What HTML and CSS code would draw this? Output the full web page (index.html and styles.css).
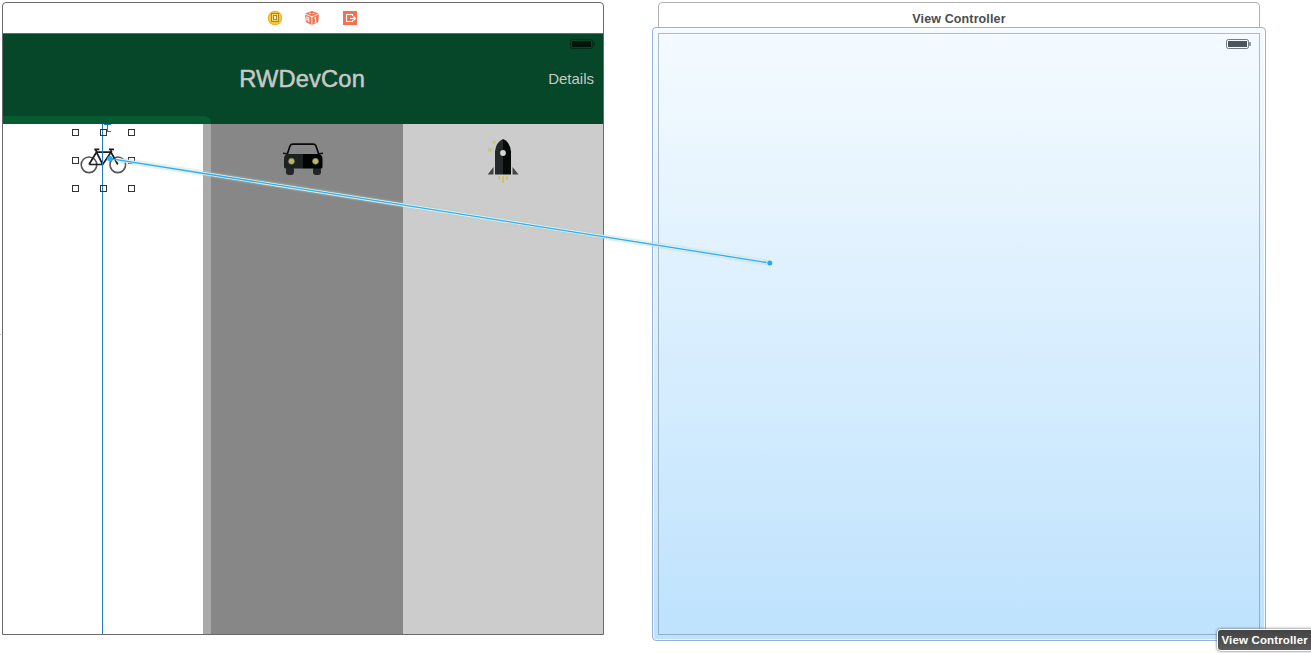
FILE: index.html
```html
<!DOCTYPE html>
<html lang="en">
<head>
<meta charset="utf-8">
<title>Storyboard</title>
<link rel="stylesheet" href="styles.css">
</head>
<body>
<main class="canvas">
  <i class="edge-mark"></i>
  <section class="scene scene-main">
    <header class="dock">
      <svg width="16" height="16" viewBox="0 0 16 16">
        <circle cx="8" cy="8" r="7.3" fill="#f7c844"/>
        <circle cx="8" cy="8" r="6.6" fill="none" stroke="#eeb331" stroke-width="1"/>
        <rect x="4.5" y="3.500" width="7" height="8" fill="#f9d86f" stroke="#a88822"/>
        <rect x="6.5" y="5.500" width="3" height="4" fill="#fff5c9" stroke="#a88822"/>
      </svg>
      <svg width="16" height="16" viewBox="0 0 16 16">
        <path d="M8 1L14.7 3.5 8 6.3 1 3.6z" fill="#f47350"/>
        <path d="M1 4.4L7.5 7v8L2 12z" fill="#f3714f"/>
        <path d="M8.3 7L15 4.3 14.3 12 8.3 15z" fill="#f3714f"/>
        <path d="M5 3.5h2M8.5 3.5h2" stroke="#fff" stroke-width=".8"/>
        <path d="M3 7v3h1.7V7.8zM4.8 10v2M10.5 8.5l1-1v4.8M10.5 12.5l2-.8" fill="none" stroke="#fff" stroke-width="1.1"/>
      </svg>
      <svg width="16" height="16" viewBox="0 0 16 16">
        <rect x="1" y="1" width="14" height="14" fill="#f3714f"/>
        <path d="M10.5 6V4.5h-6v7h6V10M8 8.5h5M11.5 6.5l2 2-2 2" fill="none" stroke="#fff" stroke-width="1.1"/>
      </svg>
    </header>
    <div class="navbar">
      <h1 class="nav-title">RWDevCon</h1>
      <span class="nav-action">Details</span>
      <svg class="battery" width="25" height="10" viewBox="0 0 25 10">
        <rect x=".5" y=".5" width="22" height="9" rx="1.8" fill="none" stroke="#042d19"/>
        <rect x="2" y="2" width="19" height="6" fill="#00150a"/>
        <path d="M24 3v4" stroke="#042b17" stroke-width="1.3"/>
      </svg>
      <i class="drop-tint"></i>
    </div>
    <div class="columns">
      <div class="column bike"></div>
      <div class="column overlap"></div>
      <div class="column car">
        <svg width="42" height="36" viewBox="0 0 42 36">
          <rect x="4" y="27" width="8" height="8" rx="3" fill="#242626"/>
          <rect x="31" y="27" width="8" height="8" rx="3" fill="#242626"/>
          <path d="M5 15L8 6q.7-1.800 3-1.800h20q2.300 0 3 1.800l3 9" fill="none" stroke="#090b0b" stroke-width="1.700"/>
          <path d="M1 13.300l4 .4M37 13.700l4-.4" stroke="#111" stroke-width="1.500"/>
          <path d="M21 14H5q-3 1-3 5v8q0 1.500 1.500 1.500H21z" fill="#1c2122"/>
          <path d="M21 14h16q3.500 1 3.500 5v8q0 1.500-1.500 1.500H21z" fill="#000403"/>
          <circle cx="9.500" cy="21.300" r="3" fill="#b9b86a" stroke="#73734b" stroke-width=".7"/>
          <circle cx="33.500" cy="21.300" r="3" fill="#b9b86a" stroke="#73734b" stroke-width=".7"/>
        </svg>
      </div>
      <div class="column rocket">
        <svg width="32" height="46" viewBox="0 0 32 46">
          <path d="M8 36.500V13.500Q9 4 16 1v35.500z" fill="#25292a"/>
          <path d="M16 36.500V1q7 3 8 12.500v23z" fill="#060a09"/>
          <path d="M6.500 29v7.500H.7z M25.500 29v7.500h6z" fill="#444"/>
          <circle cx="16" cy="15" r="2.900" fill="#d5d6d2"/>
          <path d="M7 1.500l.7 1.700 1.800.1-1.400 1.200.5 1.800L7 5.300l-1.600 1 .5-1.800-1.400-1.200 1.800-.1zM3 8.800l.8 2 2.200.1-1.700 1.400.6 2.100L3 13.200l-1.900 1.200.6-2.100L0 10.900l2.200-.1z" fill="#c9c568"/>
          <path d="M12.300 38v4M16 38v7M19.800 38v4" stroke="#c9c568" stroke-width="1.900"/>
        </svg>
      </div>
    </div>
  </section>

  <section class="scene scene-target">
    <header class="scene-title">View Controller</header>
    <div class="view"></div>
  </section>
  <div class="drop-highlight">
    <div class="view-outline">
      <svg class="battery" width="25" height="10" viewBox="0 0 25 10">
        <rect x=".5" y=".5" width="22" height="9" rx="1.800" fill="#f4faff" stroke="#737c83"/>
        <rect x="2" y="2" width="19" height="6" fill="#4d565c"/>
        <path d="M24 3v4" stroke="#626b72" stroke-width="1.300"/>
      </svg>
    </div>
  </div>

  <svg class="overlay" width="1311" height="653" viewBox="0 0 1311 653">
    <defs>
      <filter id="glow" filterUnits="userSpaceOnUse" x="90" y="140" width="700" height="140"><feGaussianBlur stdDeviation="1.100"/></filter>
    </defs>
    <g fill="none" stroke="#555" stroke-width="1.600">
      <circle cx="89" cy="164.800" r="7.800"/>
      <circle cx="117.800" cy="164.800" r="7.800"/>
    </g>
    <path d="M89 164.500l7.500-12.300H111l-8.300 12.300H89M96.500 152.200l6.200 12.300M95.500 149.500l1.500 3M94.300 149.300h5M109 149.300h5M111 149.500v2.700l6.800 12.300" fill="none" stroke="#1c1c1c" stroke-width="1.700"/>
    <path d="M102.500 124v510" stroke="#237ab8"/>
    <path d="M104 124.500h7M107.500 124v7M104 131.500h7" fill="none" stroke="#237ab8"/>
    <g fill="#fff" stroke="#333">
      <rect x="72.500" y="129.500" width="6" height="6"/><rect x="100.500" y="129.500" width="6" height="6"/><rect x="128.500" y="129.500" width="6" height="6"/>
      <rect x="72.500" y="157.500" width="6" height="6"/><rect x="128.500" y="157.500" width="6" height="6"/>
      <rect x="72.500" y="185.500" width="6" height="6"/><rect x="100.500" y="185.500" width="6" height="6"/><rect x="128.500" y="185.500" width="6" height="6"/>
    </g>
    <path d="M102.500 130v5M102.500 186v5" stroke="#237ab8"/>
    <path d="M120 160.200L770 263" stroke="#a9cfc0" stroke-width="4" opacity=".65" filter="url(#glow)"/>
    <path d="M116 159.600L770 263" stroke="#e4f4ee" stroke-width="3"/>
    <path d="M110 158.700L770 263" stroke="#29abf8" stroke-width="1.300"/>
    <circle cx="110" cy="158.700" r="2.700" fill="#29abfb"/>
    <circle cx="769.800" cy="263" r="3.300" fill="#dff3fc"/>
    <circle cx="769.800" cy="263" r="2.500" fill="#29a5f5"/>
  </svg>
  <div class="tooltip">View Controller</div>
</main>
</body>
</html>
```
FILE: styles.css
```css
* { box-sizing: border-box; }
body { margin: 0; background: #fff; font-family: "Liberation Sans", Arial, sans-serif; }
.canvas { position: relative; width: 1311px; height: 653px; overflow: hidden; background: #fff; }
.edge-mark { position: absolute; left: 0; top: 334px; width: 1px; height: 1px; background: #bbb; }
.scene { position: absolute; top: 2px; width: 602px; height: 633px; display: flex; flex-direction: column; background: #fff; }
.scene-main { left: 2px; border: 1px solid #6a6a6a; border-radius: 4px 4px 0 0; overflow: hidden; }
.dock { height: 31px; flex: none; border-bottom: 1px solid #6a6a6a; display: flex; justify-content: center; align-items: center; gap: 21.5px; padding-left: 18px; }
.navbar { position: relative; height: 90px; flex: none; background: #054728; color: #c9c9c9; display: flex; align-items: center; justify-content: flex-end; padding-right: 9px; }
.nav-title { flex: 1; margin: 0; padding-left: 53px; text-align: center; font-size: 23.7px; line-height: 28px; font-weight: 400; letter-spacing: .15px; -webkit-text-stroke: .5px #c9c9c9; }
.nav-action { font-size: 15px; line-height: 20px; }
.battery { position: absolute; right: 8px; top: 5px; }
.drop-tint { position: absolute; left: 0; bottom: 0; width: 208px; height: 8px; background: #075b30; border-top-right-radius: 7px; }
.columns { flex: 1; display: flex; }
.column { display: flex; justify-content: center; align-items: flex-start; }
.bike { width: 200px; background: #fff; }
.overlap { width: 8px; background: #a9a9a9; }
.car { width: 192px; background: #878787; padding: 16px 8px 0 0; }
.rocket { width: 200px; background: #ccc; padding-top: 14px; }
.scene-target { left: 658px; border: 1px solid #b2b2b2; border-radius: 4px 4px 0 0; }
.scene-title { height: 31px; flex: none; display: flex; align-items: center; justify-content: center; font-size: 12.5px; font-weight: 700; letter-spacing: .12px; color: #4c4c4c; }
.view { flex: 1; background: #fff; }
.drop-highlight { position: absolute; left: 652px; top: 27px; width: 614px; height: 614px; padding: 5px; border: 1px solid #94b3dc; border-radius: 4px; background: linear-gradient(#f5fbff, #bee2fd); box-shadow: inset 0 0 0 1px rgba(255,255,255,.75); }
.view-outline { position: relative; height: 602px; border: 1px solid rgba(105,125,140,.5); }
.overlay { position: absolute; left: 0; top: 0; }
.tooltip { position: absolute; left: 1218px; top: 630px; width: 98px; height: 20px; padding-left: 3.5px; border-radius: 3px; background: linear-gradient(#434343, #5b5b5b); box-shadow: 0 0 0 1px #fff, 0 0 3px 1px #555; color: #fff; font-size: 11.5px; line-height: 20px; font-weight: 700; letter-spacing: .15px; white-space: nowrap; }
```
